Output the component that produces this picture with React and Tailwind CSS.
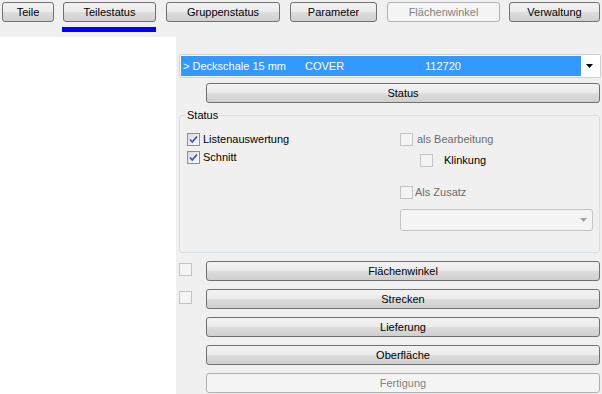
import React from "react";

const font = { fontFamily: '"Liberation Sans", Arial, sans-serif' };

function Btn({ children, className = "", disabled = false }) {
  return (
    <div
      className={
        "flex items-center justify-center rounded-[3px] border text-[11px] leading-none " +
        (disabled
          ? "border-[#adb2b5] bg-[#f4f4f4] text-[#838383] "
          : "border-[#707070] bg-[linear-gradient(to_bottom,#f2f2f2_0%,#ebebeb_50%,#dddddd_51%,#cfcfcf_100%)] text-black ") +
        className
      }
    >
      {children}
    </div>
  );
}

function Check({ checked = false, className = "" }) {
  return (
    <div
      className={
        "relative h-[13px] w-[13px] shrink-0 border " +
        (checked
          ? "border-[#8e8f8f] bg-[linear-gradient(135deg,#dcdcdc,#fbfbfb)] "
          : "border-[#c4c4c4] bg-[#f4f4f4] ") +
        className
      }
    >
      {checked && (
        <svg width="11" height="11" viewBox="0 0 11 11" className="absolute left-0 top-0">
          <path d="M2 5.5 L4.3 8 L9 2.5" fill="none" stroke="#3c5aa8" strokeWidth="1.8" />
        </svg>
      )}
    </div>
  );
}

export default function App() {
  return (
    <div className="h-[394px] w-[602px] overflow-hidden bg-[#f0f0f0] text-[11px] text-black" style={font}>
      {/* top tab buttons */}
      <div className="flex h-[37px] items-start pt-[2px]">
        <Btn className="ml-[2px] h-[20px] w-[52px]">Teile</Btn>
        <div className="ml-[9px] flex w-[93px] flex-col">
          <Btn className="h-[20px] w-[93px]">Teilestatus</Btn>
          <div className="ml-[-1px] mt-[5px] h-[5px] w-[94px] bg-[#0000ff]" />
        </div>
        <Btn className="ml-[10px] h-[20px] w-[114px]">Gruppenstatus</Btn>
        <Btn className="ml-[10px] h-[20px] w-[87px]">Parameter</Btn>
        <Btn disabled className="ml-[10px] h-[20px] w-[113px]">Flächenwinkel</Btn>
        <Btn className="ml-[9px] h-[20px] w-[91px]">Verwaltung</Btn>
      </div>

      <div className="flex">
        <div className="h-[357px] w-[176px] bg-white" />
        <div className="flex flex-col pl-[3px] pt-[17px]">
          {/* combobox */}
          <div className="flex h-[24px] w-[422px] items-center rounded-[2px] border border-[#d0d0d0] bg-white p-[1px]">
            <div className="flex h-[20px] w-[400px] items-center bg-[#3399ff] text-white">
              <span className="w-[124px] pl-[2px]">&gt; Deckschale 15 mm</span>
              <span className="w-[120px]">COVER</span>
              <span>112720</span>
            </div>
            <div className="flex flex-1 items-center justify-center">
              <svg width="8" height="5" viewBox="0 0 8 5">
                <path d="M0 0 H7 L3.5 4 Z" fill="#000" />
              </svg>
            </div>
          </div>

          <Btn className="ml-[27px] mt-[5px] h-[20px] w-[394px]">Status</Btn>

          {/* group box */}
          <div className="relative mt-[12px] h-[138px] w-[421px] rounded-[3px] border border-[#d5dfe5]">
            <span className="absolute left-[6px] top-[-8px] bg-[#f0f0f0] px-[1px] leading-[14px]">Status</span>
            <div className="flex pt-[17px] leading-[13px]">
              <div className="flex w-[220px] flex-col gap-[5px] pl-[7px]">
                <div className="flex h-[13px] items-center gap-[3px]">
                  <Check checked />
                  <span>Listenauswertung</span>
                </div>
                <div className="flex h-[13px] items-center gap-[3px]">
                  <Check checked />
                  <span>Schnitt</span>
                </div>
              </div>
              <div className="flex flex-col">
                <div className="flex h-[13px] items-center gap-[4px]">
                  <Check />
                  <span className="text-[#6d6d6d]">als Bearbeitung</span>
                </div>
                <div className="ml-[20px] mt-[8px] flex h-[13px] items-center gap-[11px]">
                  <Check />
                  <span>Klinkung</span>
                </div>
                <div className="mt-[19px] flex h-[13px] items-center gap-[2px]">
                  <Check />
                  <span className="text-[#6d6d6d]">Als Zusatz</span>
                </div>
                <div className="mt-[10px] flex h-[22px] w-[193px] items-center justify-end rounded-[3px] border border-[#c5c5c5] bg-[#f4f4f4] pr-[5px]">
                  <svg width="7" height="4" viewBox="0 0 7 4">
                    <path d="M0 0 H7 L3.5 4 Z" fill="#a0a0a0" />
                  </svg>
                </div>
              </div>
            </div>
          </div>

          {/* bottom rows */}
          <div className="mt-[8px] flex flex-col gap-[8px]">
            <div className="flex items-start">
              <Check className="mt-[2px]" />
              <Btn className="ml-[14px] h-[20px] w-[394px]">Flächenwinkel</Btn>
            </div>
            <div className="flex items-start">
              <Check className="mt-[2px]" />
              <Btn className="ml-[14px] h-[20px] w-[394px]">Strecken</Btn>
            </div>
            <Btn className="ml-[27px] h-[20px] w-[394px]">Lieferung</Btn>
            <Btn className="ml-[27px] h-[20px] w-[394px]">Oberfläche</Btn>
            <Btn disabled className="ml-[27px] h-[20px] w-[394px]">Fertigung</Btn>
          </div>
        </div>
      </div>
    </div>
  );
}
